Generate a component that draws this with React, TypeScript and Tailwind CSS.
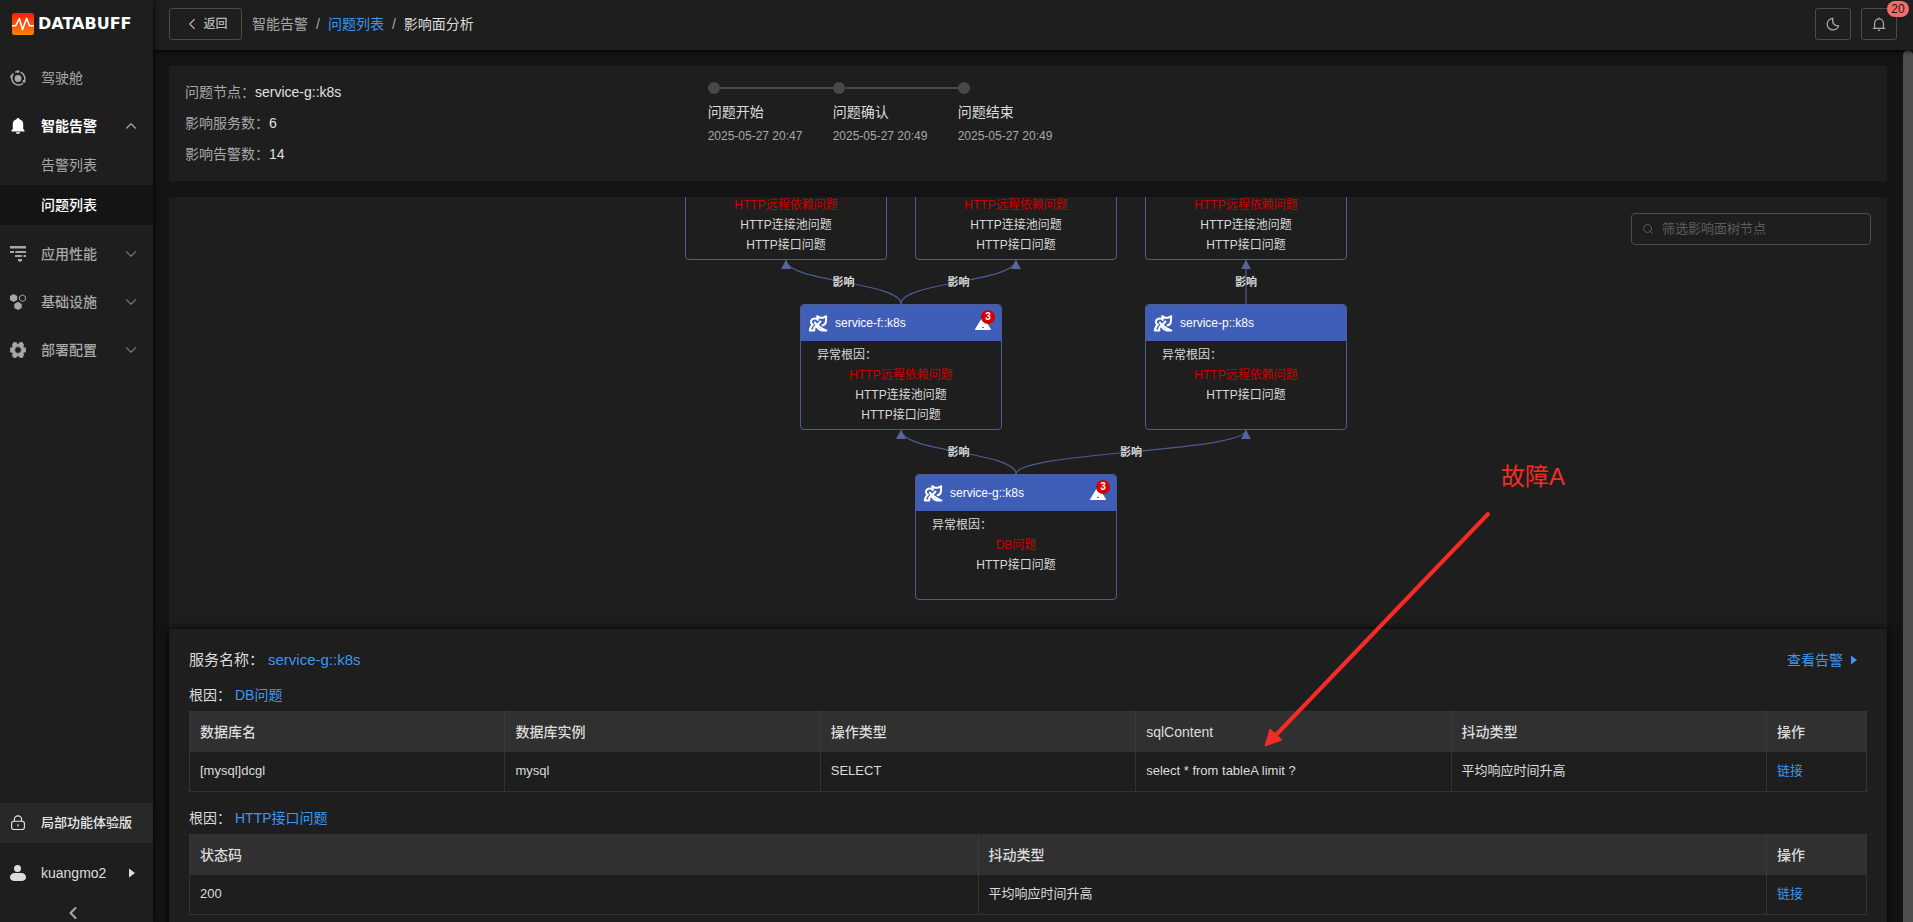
import { useState } from "react";
import { ChevronDown, ChevronLeft, ChevronUp, Search } from "lucide-react";

type GraphNode = {
  id: string;
  name?: string;
  x: number;
  y: number;
  h: number;
  alarms?: number;
  causes: string[];
};

const NODE_W = 202;

// Positions are relative to the canvas, nodes without a name are scrolled past the header
const nodes: GraphNode[] = [
  { id: "a", x: 516, y: -7, h: 70, causes: ["HTTP远程依赖问题", "HTTP连接池问题", "HTTP接口问题"] },
  { id: "b", x: 746, y: -7, h: 70, causes: ["HTTP远程依赖问题", "HTTP连接池问题", "HTTP接口问题"] },
  { id: "c", x: 976, y: -7, h: 70, causes: ["HTTP远程依赖问题", "HTTP连接池问题", "HTTP接口问题"] },
  { id: "f", name: "service-f::k8s", x: 631, y: 107, h: 126, alarms: 3, causes: ["HTTP远程依赖问题", "HTTP连接池问题", "HTTP接口问题"] },
  { id: "p", name: "service-p::k8s", x: 976, y: 107, h: 126, causes: ["HTTP远程依赖问题", "HTTP接口问题"] },
  { id: "g", name: "service-g::k8s", x: 746, y: 277, h: 126, alarms: 3, causes: ["DB问题", "HTTP接口问题"] },
];

const edges = [
  ["f", "a"],
  ["f", "b"],
  ["p", "c"],
  ["g", "f"],
  ["g", "p"],
];

const rootCauses = [
  {
    name: "DB问题",
    columns: ["数据库名", "数据库实例", "操作类型", "sqlContent", "抖动类型"],
    rows: [["[mysql]dcgl", "mysql", "SELECT", "select * from tableA limit ?", "平均响应时间升高"]],
  },
  {
    name: "HTTP接口问题",
    columns: ["状态码", "抖动类型"],
    rows: [["200", "平均响应时间升高"]],
  },
];

const steps = [
  { title: "问题开始", time: "2025-05-27 20:47" },
  { title: "问题确认", time: "2025-05-27 20:49" },
  { title: "问题结束", time: "2025-05-27 20:49" },
];

const summary = [
  { label: "问题节点：", value: "service-g::k8s" },
  { label: "影响服务数：", value: "6" },
  { label: "影响告警数：", value: "14" },
];

const CockpitIcon = () => (
  <svg viewBox="0 0 16 16" className="size-4" fill="none" stroke="currentColor" strokeWidth="1.5">
    <circle cx="8" cy="8.5" r="3.4" fill="currentColor" stroke="none" />
    <path d="M3.4 3.6A6.8 6.8 0 0 0 13 13.2M5.2 2.2A6.8 6.8 0 0 1 8 1.6M10.6 2.3a6.8 6.8 0 0 1 3.5 9.3M1.3 8l-.6-2.4" />
    <circle cx="8" cy="1.6" r="1.4" fill="currentColor" stroke="none" />
    <circle cx="14" cy="11.4" r="1.4" fill="currentColor" stroke="none" />
    <circle cx="2.4" cy="5" r="1" fill="currentColor" stroke="none" />
  </svg>
);

const BellSolidIcon = () => (
  <svg viewBox="0 0 16 16" className="size-4" fill="currentColor">
    <path d="M8 0c.8 0 1.3.5 1.4 1.2C11.9 1.800 13.200 3.600 13.200 6v5l1.200 1.200c.5.5.2 1.300-.5 1.300H2.100c-.7 0-1-.8-.5-1.300L2.800 11V6c0-2.400 1.300-4.200 3.800-4.800C6.700.5 7.200 0 8 0zM5.800 14.300h4.400C10 15.400 9.100 16 8 16s-2-.6-2.200-1.700z" />
  </svg>
);

const PerfIcon = () => (
  <svg viewBox="0 0 16 16" className="size-4" fill="currentColor">
    <path d="M0 0h16v2.400H0zM0 5h4v2H0zM5.300 5H16v2H5.300zM5 9h7v2H5zM13.500 9H16v2h-2.500zM8 13h4v2H10.800v1H9.200v-1H8z" />
  </svg>
);

const InfraIcon = () => (
  <svg viewBox="0 0 16 16" className="size-4" fill="currentColor">
    <path d="M3.600 0 7.200 2v4L3.600 8 0 6V2zM8 7.800l3.700 2.100V14L8 16l-3.700-2V9.900z" />
    <path d="m12.500.8 2.900 1.700v3.300l-2.900 1.700-2.900-1.700V2.500z" fill="none" stroke="currentColor" />
  </svg>
);

const GearIcon = () => (
  <svg viewBox="0 0 16 16" className="size-4" fill="currentColor" stroke="currentColor" strokeWidth=".8" strokeLinejoin="round" fillRule="evenodd">
    <path d="M3.600.6h2.600l.8 1.600h2L9.800.6h2.600l1.200 2.300-.6 1.400 1 1.600h1.600v4.200H14l-1 1.600.6 1.400-1.200 2.300H9.800L9 13.800H7l-.8 1.600H3.600l-1.200-2.300.6-1.400-1-1.600H.4V5.900H2l1-1.600-.6-1.400zM8 4.600a3.400 3.400 0 1 0 0 6.800 3.400 3.400 0 0 0 0-6.800z" />
  </svg>
);

const LockIcon = () => (
  <svg viewBox="0 0 16 16" className="size-4" fill="none" stroke="currentColor" strokeWidth="1.100">
    <rect x="1.600" y="6.300" width="12.800" height="8.200" rx="2.200" />
    <path d="M4.400 6.300V4.500a3.600 3.600 0 0 1 7.200 0v1.800M8 9.200v2.400" />
  </svg>
);

const UserIcon = () => (
  <svg viewBox="0 0 16 16" className="size-4" fill="currentColor">
    <circle cx="7.500" cy="3.500" r="3.500" />
    <path d="M4.500 8h7C14.200 8 16 10.200 16 12.600 16 15 14 16 11.500 16h-7C2 16 0 15 0 12.600 0 10.200 1.800 8 4.500 8z" />
  </svg>
);

const MoonIcon = () => (
  <svg viewBox="0 0 14 14" className="size-3.5" fill="none" stroke="currentColor" strokeWidth="1.200" strokeLinejoin="round">
    <path d="M7 1.300C3.700 1.400 1.200 4 1.200 7.200a5.700 5.700 0 0 0 5.700 5.700c2.800 0 5-1.700 5.700-4.300C9 9.400 5.200 6 7 1.300z" />
  </svg>
);

const BellIcon = () => (
  <svg viewBox="0 0 14 14" className="size-3.5" fill="none" stroke="currentColor" strokeWidth="1.200">
    <path d="M.8 11.400h12.400M2.600 11.400V6.200a4.400 4.400 0 0 1 8.800 0v5.200M7 .6v1.200M6 13.300h2" />
  </svg>
);

const Caret = () => (
  <svg viewBox="0 0 6 10" className="h-[10px] w-[6px]" fill="currentColor">
    <path d="M0 .5l6 4.500-6 4.500z" />
  </svg>
);

const CatIcon = () => (
  <svg viewBox="0 0 20 17" className="h-[17px] w-5" fill="none" stroke="#fff" strokeWidth="2" strokeLinejoin="round" strokeLinecap="round">
    <path d="M9.800 5 9.200 1.200l2.600 1.500h3.600l2.800-1.500-.3 5.400c-.2 2-1.400 3.200-3.200 3.600" />
    <path d="M9 3.900C5.500 2.800 2.500 4.600 3 7.600c.2 1.200 1 1.800 2 1.900-1.800 1.200-2.800 3-3.200 6h4.500c-.6-2.400.3-4 2-5" />
    <path d="M7 7.500c1.400 3 4.800 4.500 7.400 6 1.200.8 2.200 1.700 4 1.900h-4.800c-2-.3-3.700-1.700-5.300-3.900" />
    <path d="M12.500 6.500 8 11.500" />
  </svg>
);

const Logo = () => (
  <a href="#" className="flex h-12 items-center gap-1 pl-3 text-white">
    <svg viewBox="0 0 22 22" className="size-[22px]">
      <defs>
        <linearGradient id="logo" x1="0" y1="0" x2="0" y2="1">
          <stop offset="0" stopColor="#fb1d08" />
          <stop offset="1" stopColor="#fd8206" />
        </linearGradient>
      </defs>
      <rect width="22" height="22" rx="2.500" fill="url(#logo)" />
      <path d="M0 12.800h3.600L7.400 5.600l3.200 11 4-11.400 2.800 7.600H22" fill="none" stroke="#fff" strokeWidth="1.600" strokeLinejoin="round" />
    </svg>
    <span className="font-['DejaVu_Sans',sans-serif] text-base leading-none font-bold">DATABUFF</span>
  </a>
);

const menus = [
  { title: "应用性能", icon: <PerfIcon /> },
  { title: "基础设施", icon: <InfraIcon /> },
  { title: "部署配置", icon: <GearIcon /> },
];

const Sidebar = () => {
  const [open, setOpen] = useState(true);

  return (
    <aside className="relative z-20 flex w-[153px] shrink-0 flex-col bg-[#1e1e1e] text-sm text-[#a8a8a8] shadow-[0_0_6px_#000]">
      <Logo />
      <nav className="mt-[10px] flex flex-1 flex-col gap-2">
        <a href="#" className="flex h-10 items-center gap-[15px] pl-[10px]">
          <CockpitIcon />
          驾驶舱
        </a>
        <div className="pb-px">
          <button
            onClick={() => setOpen(!open)}
            className="flex h-[39px] w-full items-center gap-[15px] pr-[13px] pl-[10px] font-bold text-white"
          >
            <BellSolidIcon />
            智能告警
            <ChevronUp className="ml-auto size-[18px] text-[#a8a8a8]" strokeWidth={1.5} />
          </button>
          {open && (
            <>
              <a href="#" className="flex h-10 items-center pl-[41px]">告警列表</a>
              <a href="#" className="flex h-10 items-center bg-[#141414] pl-[41px] font-medium text-white">问题列表</a>
            </>
          )}
        </div>
        {menus.map((menu) => (
          <button key={menu.title} className="flex h-10 items-center gap-[15px] pr-[13px] pl-[10px] font-medium">
            {menu.icon}
            {menu.title}
            <ChevronDown className="ml-auto size-[18px] text-[#777]" strokeWidth={1.5} />
          </button>
        ))}
      </nav>
      <a href="#" className="flex h-10 items-center gap-[15px] bg-[#282828] pl-[10px] text-[13px] font-medium text-[#e8e8e8]">
        <LockIcon />
        局部功能体验版
      </a>
      <button className="mt-[10px] flex h-10 items-center gap-[15px] pr-[18px] pl-[10px] text-[#dcdcdc]">
        <UserIcon />
        kuangmo2
        <span className="ml-auto"><Caret /></span>
      </button>
      <button aria-label="收起" className="flex h-[29px] items-center justify-center pt-[10px] pr-2">
        <ChevronLeft className="size-5" strokeWidth={2.5} />
      </button>
    </aside>
  );
};

const Header = () => (
  <header className="relative z-10 flex h-[50px] shrink-0 items-center bg-[#1e1e1e] px-4 pb-[2px] text-sm text-[#a8a8a8] shadow-[0_1px_4px_#000]">
    <button className="mr-[10px] flex h-8 w-[73px] items-center justify-center gap-[2px] rounded-[3px] border border-[#4c4c4c] text-xs font-medium text-[#b8b8b8]">
      <ChevronLeft className="size-[18px]" strokeWidth={1.5} />
      返回
    </button>
    <nav className="flex gap-2">
      <span>智能告警</span>
      <span>/</span>
      <a href="#" className="text-[#3d97ee]">问题列表</a>
      <span>/</span>
      <span className="text-[#dcdcdc]">影响面分析</span>
    </nav>
    <div className="ml-auto flex gap-[10px]">
      <button aria-label="切换主题" className="flex h-8 w-9 items-center justify-center rounded-[3px] border border-[#4c4c4c]">
        <MoonIcon />
      </button>
      <button aria-label="消息" className="relative flex h-8 w-9 items-center justify-center rounded-[3px] border border-[#4c4c4c]">
        <BellIcon />
        <span className="absolute -top-2 -right-[13px] flex h-4 w-[22px] items-center justify-center rounded-full bg-[#f56c6c] text-xs leading-none text-[#2a1414]">
          20
        </span>
      </button>
    </div>
  </header>
);

const NodeCard = ({ node }: { node: GraphNode }) => (
  <div
    className="absolute overflow-hidden rounded-[4px] border border-[#4d5b90] bg-[#1e1e1e] text-xs text-[#d9d9d9]"
    style={{ left: node.x, top: node.y, width: NODE_W, height: node.h }}
  >
    {node.name && (
      <div className="flex h-9 items-center bg-[#3f5eb8] pr-[10px] pl-[7px] text-white">
        <CatIcon />
        <span className="ml-[7px]">{node.name}</span>
        {node.alarms && (
          <span className="relative ml-auto">
            <svg viewBox="0 0 16 16" className="size-4">
              <path d="M8 2 15.600 14.500H.4z" fill="#fff" stroke="#fff" strokeLinejoin="round" />
              <path d="M7 12.400h2" stroke="#3f5eb8" />
            </svg>
            <span className="absolute -top-[5px] -right-1 flex size-[14px] items-center justify-center rounded-full bg-[#d40000] text-[10px] leading-none font-bold">
              {node.alarms}
            </span>
          </span>
        )}
      </div>
    )}
    <div className="px-4 pt-1 leading-5">
      {node.name && <p>异常根因：</p>}
      {node.causes.map((cause, i) => (
        <p key={cause} className={i === 0 ? "text-center text-[#cc0000]" : "text-center"}>{cause}</p>
      ))}
    </div>
  </div>
);

const Edges = () => (
  <svg className="absolute inset-0 size-full">
    {edges.map(([from, to]) => {
      const source = nodes.find((n) => n.id === from)!;
      const target = nodes.find((n) => n.id === to)!;
      const x1 = source.x + NODE_W / 2;
      const y1 = source.y;
      const x2 = target.x + NODE_W / 2;
      const y2 = target.y + target.h;
      const mid = (y1 + y2) / 2;
      return (
        <g key={from + to}>
          <path d={`M${x1} ${y1}C${x1} ${mid} ${x2} ${mid} ${x2} ${y2}`} fill="none" stroke="#4d5b90" strokeWidth="1.200" />
          <path d={`M${x2} ${y2}l5 9h-10z`} fill="#56659f" />
          <text x={(x1 + x2) / 2} y={mid + 4} textAnchor="middle" fill="#d9d9d9" fontSize="11" fontWeight="bold">
            影响
          </text>
        </g>
      );
    })}
  </svg>
);

const Topology = () => (
  <section className="relative mt-4 h-[432px] overflow-hidden bg-[#1e1e1e]">
    <Edges />
    {nodes.map((node) => (
      <NodeCard key={node.id} node={node} />
    ))}
    <label className="absolute top-4 right-4 flex h-8 w-60 items-center gap-2 rounded-[4px] border border-[#4c4c4c] bg-[#1e1e1e] px-[10px] text-[13px] text-[#6b6b6b]">
      <Search className="size-3" strokeWidth={1.5} />
      <input
        aria-label="筛选影响面树节点"
        placeholder="筛选影响面树节点"
        className="min-w-0 flex-1 bg-transparent outline-none placeholder:text-[#5c5c5c]"
      />
    </label>
  </section>
);

const Overview = () => (
  <section className="flex bg-[#1e1e1e] px-4 py-[11px] text-sm">
    <dl className="w-[31%] leading-[31px] text-[#a8a8a8]">
      {summary.map((item) => (
        <div key={item.label} className="flex">
          <dt>{item.label}</dt>
          <dd className="text-[#e0e0e0]">{item.value}</dd>
        </div>
      ))}
    </dl>
    <ol className="flex pt-[5px]">
      {steps.map((step, i) => (
        <li key={step.title} className="w-[125px]">
          <div className="flex items-center">
            <span className="size-3 rounded-full bg-[#484848]" />
            {i < steps.length - 1 && <span className="h-[2px] flex-1 bg-[#484848]" />}
          </div>
          <p className="mt-[6px] leading-6 text-[#dcdcdc]">{step.title}</p>
          <p className="text-xs leading-6 text-[#a8a8a8]">{step.time}</p>
        </li>
      ))}
    </ol>
  </section>
);

const CauseTable = ({ columns, rows }: { columns: string[]; rows: string[][] }) => (
  <table className="w-full table-fixed border-collapse border border-[#333] text-left text-[#dcdcdc]">
    <thead className="bg-[#303030] text-sm">
      <tr className="h-10">
        {columns.map((col) => (
          <th key={col} className="border-r border-[#3a3a3a] px-[10px] font-medium">{col}</th>
        ))}
        <th className="w-[100px] px-[10px] font-medium">操作</th>
      </tr>
    </thead>
    <tbody className="text-[13px]">
      {rows.map((row) => (
        <tr key={row[0]} className="h-10">
          {row.map((cell, i) => (
            <td key={i} className="border-r border-[#333] px-[10px]">{cell}</td>
          ))}
          <td className="px-[10px]">
            <a href="#" className="text-[#3d97ee]">链接</a>
          </td>
        </tr>
      ))}
    </tbody>
  </table>
);

const Detail = () => (
  <section className="relative bg-[#1e1e1e] px-5 py-4 text-sm text-[#dcdcdc] shadow-[0_0_8px_#000]">
    <div className="mb-1 flex items-center leading-[30px]">
      <h2 className="text-[15px]">服务名称：</h2>
      <a href="#" className="ml-1 text-[15px] text-[#3d97ee]">service-g::k8s</a>
      <a href="#" className="ml-auto flex items-center gap-2 pr-[10px] text-[#3d97ee]">
        查看告警
        <Caret />
      </a>
    </div>
    <div className="flex flex-col gap-[10px]">
      {rootCauses.map((cause) => (
        <div key={cause.name}>
          <h3 className="flex gap-1 leading-8">
            根因：
            <a href="#" className="text-[#3d97ee]">{cause.name}</a>
          </h3>
          <CauseTable columns={cause.columns} rows={cause.rows} />
        </div>
      ))}
    </div>
  </section>
);

// Red note drawn over the canvas and the table
const Annotation = () => (
  <div className="pointer-events-none absolute top-[411px] left-[1111px] text-[#f52b26]">
    <p className="pl-[237px] text-2xl leading-8">故障A</p>
    <svg viewBox="0 0 230 240" className="mt-[17px] h-60 w-[230px]">
      <path d="M224 4 9 228" stroke="currentColor" strokeWidth="4" strokeLinecap="round" />
      <path d="M1 236 6 219 18 230z" fill="currentColor" stroke="currentColor" strokeLinejoin="round" />
    </svg>
  </div>
);

const App = () => {
  return (
    <div className="flex h-screen overflow-hidden bg-[#141414] font-['Liberation_Sans','Noto_Sans_CJK_SC',sans-serif]">
      <Sidebar />
      <div className="flex min-w-0 flex-1 flex-col">
        <Header />
        <div className="flex min-h-0 flex-1">
          <main className="relative min-w-0 flex-1 overflow-hidden p-4">
            <Overview />
            <Topology />
            <Detail />
            <Annotation />
          </main>
          <div className="w-[10px] rounded-t-[5px] bg-[#4e4e4e]" />
        </div>
      </div>
    </div>
  );
};

export default App;
